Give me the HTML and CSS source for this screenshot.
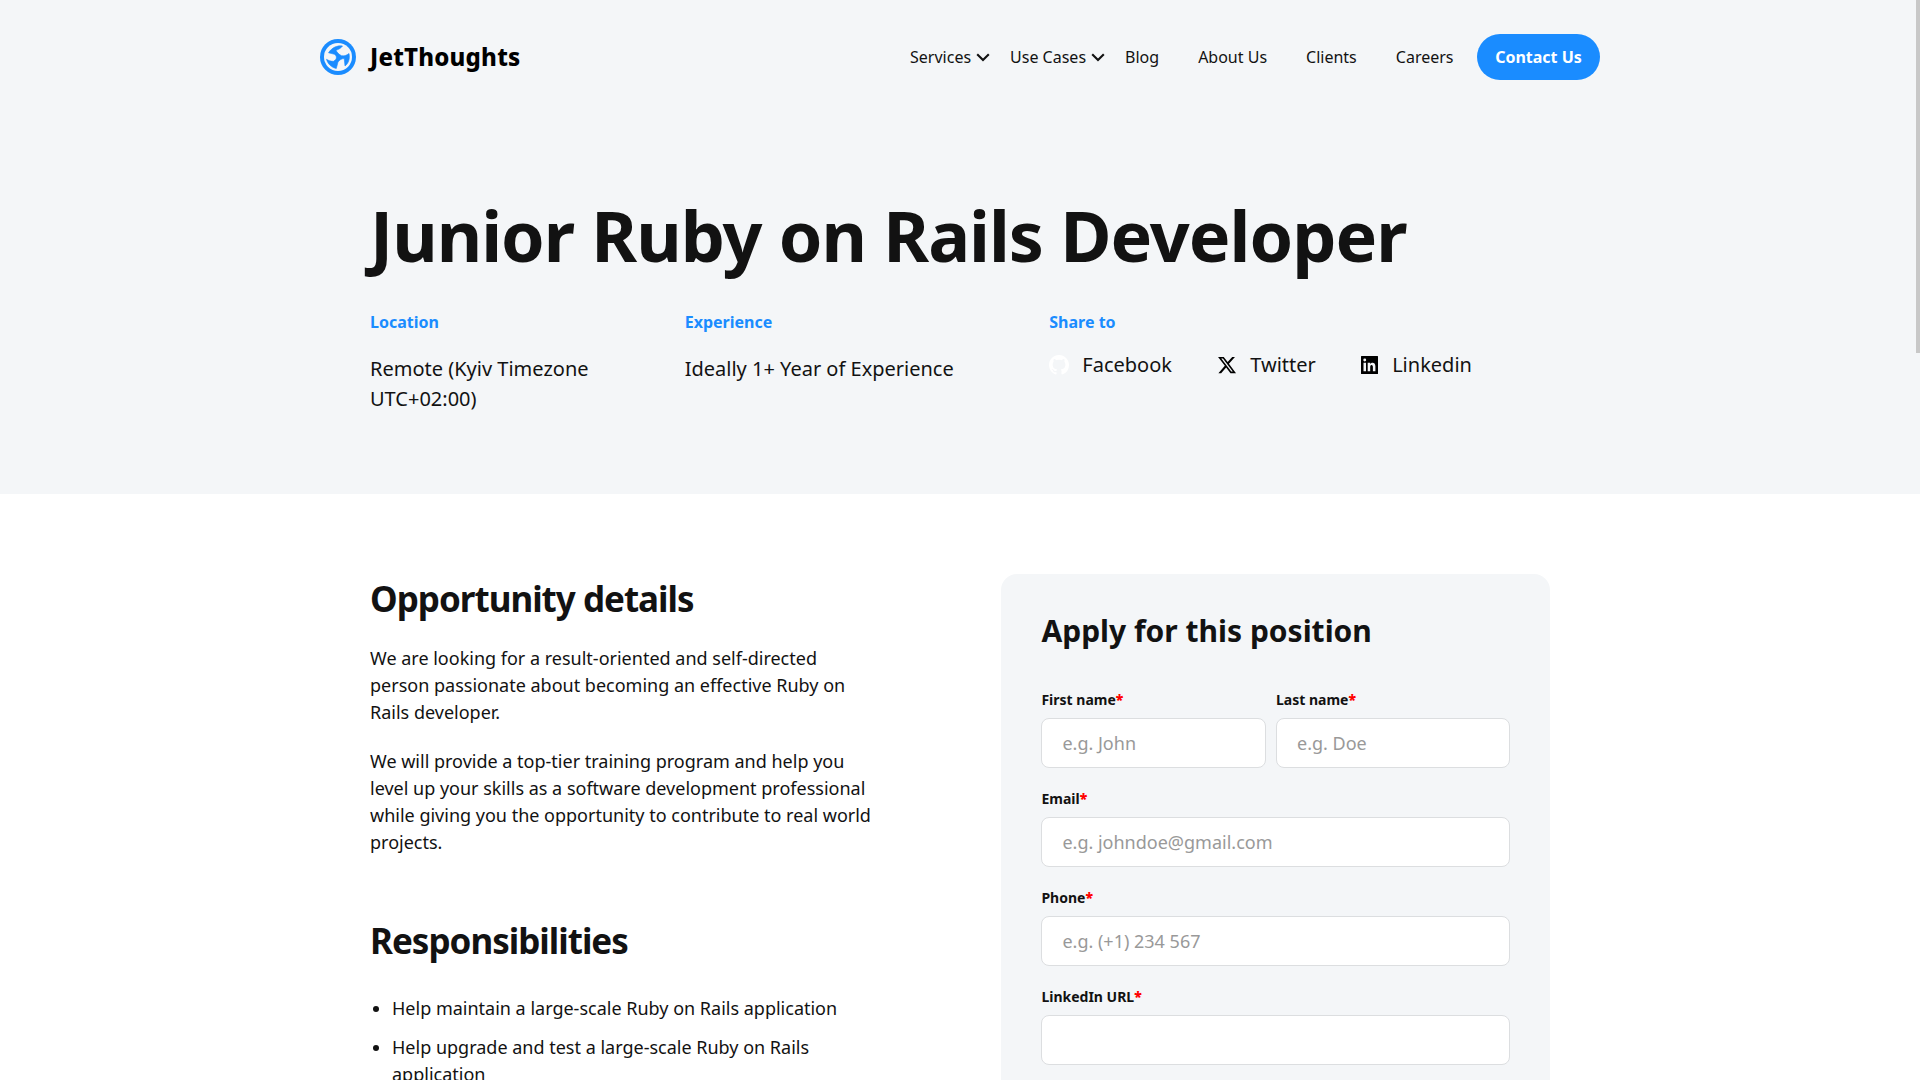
FILE: index.html
```html
<!DOCTYPE html>
<html lang="en">
<head>
<meta charset="utf-8">
<title>Junior Ruby on Rails Developer - JetThoughts</title>
<link rel="stylesheet" href="styles.css">
</head>
<body>
<div class="page">
  <div class="hero">
    <header class="header">
      <a class="logo">
        <svg class="logo-mark" viewBox="0 0 36 36">
          <circle cx="18" cy="18" r="18" fill="#1a8cff"/>
          <circle cx="18" cy="18" r="14" fill="#f4f6f8"/>
          <path fill="#1a8cff" stroke="#1a8cff" stroke-width=".6" stroke-linejoin="round" d="M22.500 7 C17 6.300 12 8.500 8.500 13.800 L14.500 15.300 C16.500 17 17 18.500 15.800 20.500 L13.500 22.300 C11 22.500 8.500 21.500 6.500 20.300 C7.800 25 11.500 28.500 16.300 29.500 L18 23 C19.500 21 21.500 19.700 24.200 19.500 L25 27 C28.500 24.500 30.200 19.500 29 14.500 C26.500 16.500 24 17.200 21.500 16.700 C19 15.500 17 13.500 16 11.300 C18.500 10.500 21 9.200 22.500 7 Z"/>
        </svg>
        <span class="logo-text">JetThoughts</span>
      </a>
      <nav class="nav">
        <a class="drop">Services<svg class="chev" viewBox="0 0 14 9"><path d="M1.200 1.200 L7 7 L12.800 1.200"/></svg></a>
        <a class="drop">Use Cases<svg class="chev" viewBox="0 0 14 9"><path d="M1.200 1.200 L7 7 L12.800 1.200"/></svg></a>
        <a class="link">Blog</a>
        <a class="link">About Us</a>
        <a class="link">Clients</a>
        <a class="link">Careers</a>
      </nav>
      <a class="contact">Contact Us</a>
    </header>
    <h1 class="title">Junior Ruby on Rails Developer</h1>
    <div class="facts">
      <div class="fact fact-location">
        <h2 class="fact-name">Location</h2>
        <p class="fact-value">Remote (Kyiv Timezone UTC+02:00)</p>
      </div>
      <div class="fact fact-experience">
        <h2 class="fact-name">Experience</h2>
        <p class="fact-value">Ideally 1+ Year of Experience</p>
      </div>
      <div class="fact">
        <h2 class="fact-name">Share to</h2>
        <div class="share">
          <a class="share-link"><svg class="share-icon" viewBox="0 0 16 16"><path fill="#fff" d="M8 0C3.580 0 0 3.580 0 8c0 3.540 2.290 6.530 5.470 7.590.4.070.550-.170.550-.380 0-.190-.010-.820-.010-1.490-2.010.370-2.530-.490-2.690-.940-.090-.230-.480-.940-.820-1.130-.280-.150-.680-.520-.010-.530.630-.010 1.080.580 1.230.820.720 1.210 1.870.870 2.330.660.070-.520.280-.870.510-1.070-1.780-.2-3.640-.890-3.640-3.950 0-.870.310-1.590.820-2.150-.080-.2-.360-1.020.080-2.120 0 0 .670-.210 2.200.820.640-.180 1.320-.270 2-.270s1.360.090 2 .270c1.530-1.040 2.200-.820 2.200-.820.440 1.100.160 1.920.080 2.120.510.560.820 1.270.820 2.150 0 3.070-1.870 3.750-3.650 3.950.290.250.540.730.540 1.480 0 1.070-.010 1.930-.010 2.200 0 .210.150.460.550.380A8.010 8.010 0 0 0 16 8c0-4.420-3.580-8-8-8z"/></svg>Facebook</a>
          <a class="share-link share-x"><svg class="share-icon" viewBox="0 0 24 24"><path d="M18.244 2.250h3.308l-7.227 8.260 8.502 11.240H16.170l-5.214-6.817L4.990 21.750H1.680l7.730-8.835L1.254 2.250H8.080l4.713 6.231zm-1.161 17.520h1.833L7.084 4.126H5.117z"/></svg>Twitter</a>
          <a class="share-link"><svg class="share-icon share-in" viewBox="0 0 17 18"><path fill-rule="evenodd" d="M.5 0h16a.5.5 0 0 1 .5.5v17a.5.5 0 0 1-.5.5H.5a.5.5 0 0 1-.5-.5V.5a.5.5 0 0 1 .5-.5zM2.500 6.700v8.600h2.500V6.700zM3.750 2.600a1.450 1.450 0 1 0 0 2.900 1.450 1.450 0 0 0 0-2.900zM6.700 6.700v8.600h2.500V11c0-2.700 2.700-2.500 2.700 0v4.300h2.500V10.200c0-4.200-3.800-4.300-5.200-2.200V6.700z"/></svg>Linkedin</a>
        </div>
      </div>
    </div>
  </div>
  <main class="main">
    <article class="article">
      <h2 class="heading">Opportunity details</h2>
      <p class="para">We are looking for a result-oriented and self-directed person passionate about becoming an effective Ruby on Rails developer.</p>
      <p class="para">We will provide a top-tier training program and help you level up your skills as a software development professional while giving you the opportunity to contribute to real world projects.</p>
      <h2 class="heading heading-next">Responsibilities</h2>
      <ul class="list">
        <li>Help maintain a large-scale Ruby on Rails application</li>
        <li>Help upgrade and test a large-scale Ruby on Rails application</li>
      </ul>
    </article>
    <form class="form">
      <h2 class="form-title">Apply for this position</h2>
      <div class="names">
        <label class="field">First name<b>*</b><input class="input" placeholder="e.g. John"></label>
        <label class="field">Last name<b>*</b><input class="input" placeholder="e.g. Doe"></label>
      </div>
      <label class="field">Email<b>*</b><input class="input" placeholder="e.g. johndoe@gmail.com"></label>
      <label class="field">Phone<b>*</b><input class="input" placeholder="e.g. (+1) 234 567"></label>
      <label class="field">LinkedIn URL<b>*</b><input class="input"></label>
    </form>
  </main>
</div>
<div class="scroll-thumb"></div>
</body>
</html>
```
FILE: styles.css
```css
* { box-sizing: border-box; }
body {
  margin: 0;
  background: #fff;
  color: #121212;
  font-family: "Noto Sans", sans-serif;
  font-size: 18px;
  line-height: 27px;
}
h1, h2, p, ul { margin: 0; }
.page { height: 1080px; overflow: hidden; }
.hero { height: 494px; background: #f4f6f8; }
.header {
  display: flex;
  align-items: center;
  width: 1280px;
  height: 114px;
  margin: 0 auto;
  font-size: 16px;
  line-height: 24px;
}
.logo { display: flex; align-items: center; gap: 14px; }
.logo-mark { width: 36px; height: 36px; }
.logo-text { padding-bottom: 1px; font: 800 24px/32px "Noto Sans", sans-serif; letter-spacing: 0.2px; color: #000; }
.nav { display: flex; margin-left: auto; }
.drop { display: flex; align-items: center; margin-right: 20px; }
.chev { width: 14px; height: 9px; margin-left: 5px; fill: none; stroke: #121212; stroke-width: 2.1; }
.link { margin-right: 39px; }
.link:last-child { margin-right: 23.5px; }
.contact {
  width: 123px;
  height: 46px;
  border-radius: 23px;
  background: #1a8cff;
  color: #fff;
  font-weight: 700;
  line-height: 46px;
  text-align: center;
}
.title {
  width: 1180px;
  margin: 74px auto 0;
  font-size: 70px;
  line-height: 94px;
  letter-spacing: -1px;
}
.facts { display: flex; width: 1180px; margin: 28px auto 0; }
.fact-location { width: 314.7px; padding-right: 64px; }
.fact-experience { width: 364.6px; }
.fact-name { color: #1a8cff; font-size: 16px; line-height: 24px; }
.fact-value { margin-top: 20px; font-size: 20px; line-height: 30px; }
.share { display: flex; gap: 45.3px; margin-top: 16px; font-size: 20px; line-height: 30px; }
.share-link { display: flex; align-items: center; gap: 13px; }
.share-icon { width: 20px; height: 20px; }
.share-in { width: 17px; height: 18px; margin-right: 1px; }
.main { display: flex; justify-content: space-between; width: 1180px; margin: 80px auto 0; }
.article { width: 510px; padding-top: 2px; }
.heading { font-size: 35px; line-height: 46px; letter-spacing: -1px; }
.para { margin-top: 22px; }
.heading + .para { margin-top: 23px; }
.heading-next { margin-top: 62px; }
.list { margin-top: 31px; padding-left: 22px; }
.list li { margin-bottom: 12px; }
.form { width: 548.6px; height: 700px; padding: 40px; border-radius: 16px; background: #f4f6f8; }
.form-title { margin-bottom: 41px; font-size: 30px; line-height: 34px; }
.names { display: grid; grid-template-columns: 224.6px 234px; gap: 10px; }
.field { display: block; margin-bottom: 20px; font-size: 14px; font-weight: 700; line-height: 22px; }
.field b { color: #f00; }
.input {
  display: block;
  width: 100%;
  height: 50px;
  margin-top: 7px;
  padding: 0 20px;
  border: 1px solid #dcdee0;
  border-radius: 8px;
  background: #fff;
  font: 18px/27px "Noto Sans", sans-serif;
}
.input::placeholder { color: #999; }
.scroll-thumb { position: absolute; top: 0; right: 0; width: 4px; height: 353px; background: #c8c8c8; }
```
